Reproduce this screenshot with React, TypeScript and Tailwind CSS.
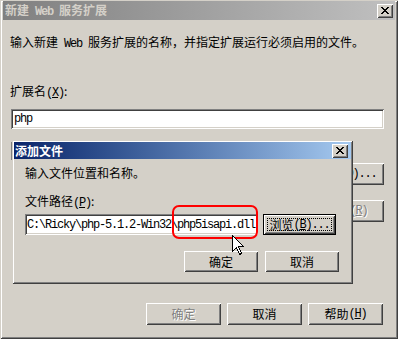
import React from "react";

const cjk = "font-['Noto_Sans_CJK_SC',sans-serif]";
const mono = "font-['Liberation_Mono',monospace] tracking-[-1.2px] whitespace-pre";
const raised =
  "shadow-[inset_1px_1px_0_#fff,inset_-1px_-1px_0_#404040,inset_2px_2px_0_#d4d0c8,inset_-2px_-2px_0_#808080]";
const frame =
  "shadow-[inset_1px_1px_0_#d4d0c8,inset_-1px_-1px_0_#404040,inset_2px_2px_0_#fff,inset_-2px_-2px_0_#808080]";
const sunken =
  "shadow-[inset_1px_1px_0_#808080,inset_-1px_-1px_0_#fff,inset_2px_2px_0_#404040,inset_-2px_-2px_0_#d4d0c8]";

function Btn({
  children,
  className = "",
  disabled = false,
}: {
  children: React.ReactNode;
  className?: string;
  disabled?: boolean;
}) {
  return (
    <div
      className={`flex shrink-0 items-center justify-center bg-[#d4d0c8] ${raised} ${
        disabled ? "text-[#808080] [text-shadow:1px_1px_0_#fff]" : "text-black"
      } ${className}`}
    >
      {children}
    </div>
  );
}

function Mn({ k }: { k: string }) {
  return (
    <span className={mono}>
      (<span className="underline">{k}</span>)
    </span>
  );
}

function CloseBtn() {
  return (
    <div className={`flex h-[14px] w-[16px] items-center justify-center bg-[#d4d0c8] ${raised}`}>
      <svg width="8" height="7" viewBox="0 0 8 7" shapeRendering="crispEdges" className="-mt-px">
        <g fill="#000">
          <rect x="0" y="0" width="2" height="1" />
          <rect x="6" y="0" width="2" height="1" />
          <rect x="1" y="1" width="2" height="1" />
          <rect x="5" y="1" width="2" height="1" />
          <rect x="2" y="2" width="4" height="1" />
          <rect x="3" y="3" width="2" height="1" />
          <rect x="2" y="4" width="4" height="1" />
          <rect x="1" y="5" width="2" height="1" />
          <rect x="5" y="5" width="2" height="1" />
          <rect x="0" y="6" width="2" height="1" />
          <rect x="6" y="6" width="2" height="1" />
        </g>
      </svg>
    </div>
  );
}

export default function App() {
  return (
    <div
      className={`relative flex h-[339px] w-[398px] flex-col bg-[#d4d0c8] px-[3px] pb-[2px] pt-px text-[12px] leading-[14px] text-black ${frame} ${cjk}`}
    >
      {/* title bar (inactive) */}
      <div className="flex h-[19px] shrink-0 items-center justify-between bg-gradient-to-r from-[#808080] to-[#c0c0c0] px-[2px]">
        <span className="font-bold text-[#d4d0c8]">
          新建<span className={mono}> Web </span>服务扩展
        </span>
        <CloseBtn />
      </div>

      <div className="flex flex-1 flex-col pb-[12px] pl-[7px] pr-[11px] pt-[15px]">
        <p>
          输入新建<span className={mono}> Web </span>服务扩展的名称，并指定扩展运行必须启用的文件。
        </p>
        <p className="mt-[33px]">
          扩展名<Mn k="X" />:
        </p>
        <div className={`ml-px mt-[9px] flex h-[20px] items-center bg-white px-[3px] ${sunken}`}>
          <span className={mono}>php</span>
        </div>

        {/* list + side buttons, mostly covered by the child dialog */}
        <div className="mt-[13px] flex flex-1 flex-col">
          <div className={`ml-px h-[18px] w-[339px] bg-white ${sunken}`} />
          <Btn className="mt-[3px] h-[22px] w-[75px] self-end">
            添加<Mn k="D" />
            <span className={mono}>...</span>
          </Btn>
          <Btn disabled className="mt-[15px] h-[22px] w-[75px] self-end">
            删除<Mn k="R" />
          </Btn>
        </div>

        <div className="mr-px flex justify-end gap-[6px]">
          <Btn disabled className="h-[22px] w-[75px]">
            确定
          </Btn>
          <Btn className="h-[22px] w-[75px]">取消</Btn>
          <Btn className="h-[22px] w-[75px]">
            帮助<Mn k="H" />
          </Btn>
        </div>
      </div>

      {/* child dialog */}
      <div className={`absolute left-[12px] top-[140px] flex h-[144px] w-[341px] flex-col bg-[#d4d0c8] p-[2px] ${frame}`}>
        <div className="flex h-[17px] shrink-0 items-center justify-between bg-gradient-to-r from-[#0a246a] to-[#a6caf0] pl-px pr-[3px]">
          <span className="font-bold text-white">添加文件</span>
          <CloseBtn />
        </div>
        <div className="flex flex-col pl-[11px] pr-[12px] pt-[7px]">
          <p>输入文件位置和名称。</p>
          <p className="mt-[14px]">
            文件路径<Mn k="P" />:
          </p>
          <div className="mt-[4px] flex items-center">
            <div className={`flex h-[21px] w-[233px] items-center bg-white pl-[2px] ${sunken}`}>
              <span className={mono}>C:\Ricky\php-5.1.2-Win32\php5isapi.dll</span>
            </div>
            <div className="ml-[5px] h-[21px] w-[73px] border border-black">
              <Btn className="relative h-full w-full">
                <div className="absolute inset-[3px] border border-dotted border-black" />
                浏览<Mn k="B" />
                <span className={mono}>...</span>
              </Btn>
            </div>
          </div>
          <div className="mt-[16px] flex justify-end gap-[7px]">
            <Btn className="h-[21px] w-[74px]">确定</Btn>
            <Btn className="h-[21px] w-[74px]">取消</Btn>
          </div>
        </div>
      </div>

      {/* red highlight */}
      <div className="absolute left-[172px] top-[205px] h-[34px] w-[86px] rounded-[7px] border-2 border-[#ff0000]" />

      {/* mouse pointer */}
      <svg
        className="absolute left-[232px] top-[235px]"
        width="13"
        height="21"
        viewBox="0 0 13 21"
        shapeRendering="crispEdges"
      >
        <path d="M0.5 0.5 L0.5 16.5 L4.5 12.5 L7.5 19.5 L9.5 18.5 L6.5 11.5 L11.5 11.5 Z" fill="#fff" stroke="#000" />
      </svg>
    </div>
  );
}
